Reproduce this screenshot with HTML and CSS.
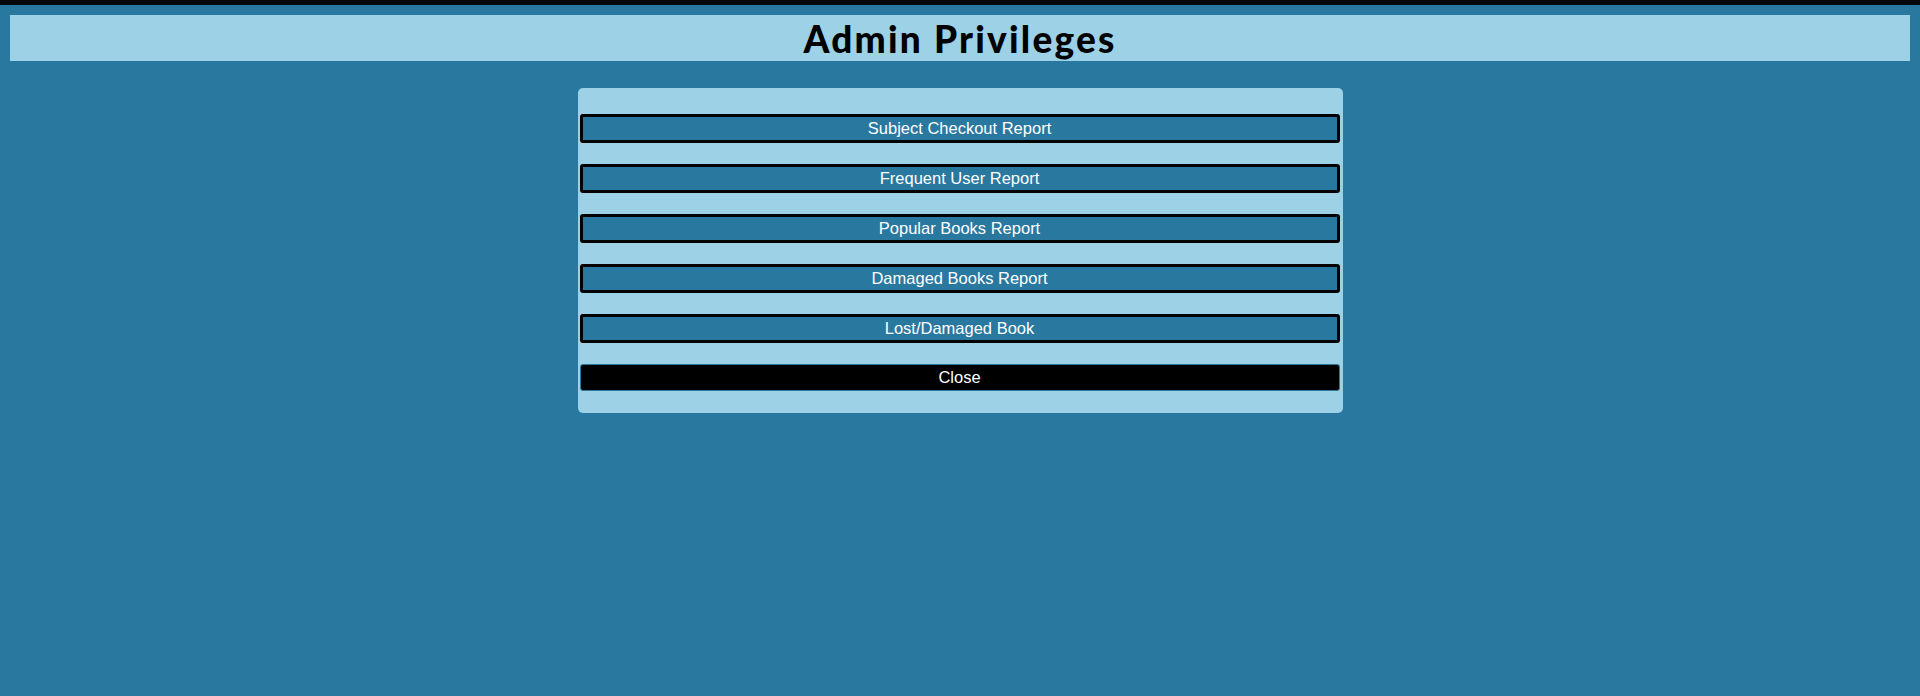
FILE: index.html
```html
<!DOCTYPE html>
<html lang="en">
<head>
<meta charset="utf-8">
<title>Admin Privileges</title>
<link rel="stylesheet" href="styles.css">
</head>
<body>
<div class="topbar"></div>
<header class="header">
  <h1 class="title">Admin Privileges</h1>
</header>
<main class="panel">
  <button class="btn">Subject Checkout Report</button>
  <button class="btn">Frequent User Report</button>
  <button class="btn">Popular Books Report</button>
  <button class="btn">Damaged Books Report</button>
  <button class="btn">Lost/Damaged Book</button>
  <button class="btn btn-close">Close</button>
</main>
</body>
</html>
```
FILE: styles.css
```css
html, body {
  margin: 0;
  padding: 0;
}
body {
  background: #2978a0;
  min-height: 696px;
  font-family: "Liberation Sans", Arial, sans-serif;
}
.topbar {
  height: 5px;
  background: #05070a;
}
.header {
  margin: 10px 10px 0;
  height: 46px;
  background: #9dd1e6;
  display: flex;
  align-items: center;
  justify-content: center;
}
.title {
  margin: 0;
  font-family: Lato, "Open Sans", sans-serif;
  font-weight: 900;
  font-size: 37px;
  letter-spacing: 2.2px;
  line-height: 46px;
  color: #000;
  padding-top: 2px;
}
.panel {
  width: 765px;
  box-sizing: border-box;
  margin: 27px auto 0;
  padding: 26px 3px 22px 2px;
  background: #9dd1e6;
  border-radius: 5px;
  display: flex;
  flex-direction: column;
  gap: 21px;
}
.btn {
  display: block;
  width: 100%;
  height: 29px;
  box-sizing: border-box;
  margin: 0;
  padding: 0;
  border: 3px solid #000;
  border-radius: 3px;
  background: #2978a0;
  color: #fff;
  font-family: "Liberation Sans", Arial, sans-serif;
  font-size: 16.5px;
  line-height: 23px;
  text-align: center;
}
.btn-close {
  height: 27px;
  border: 1px solid #2978a0;
  background: #000;
  line-height: 25px;
}
```
